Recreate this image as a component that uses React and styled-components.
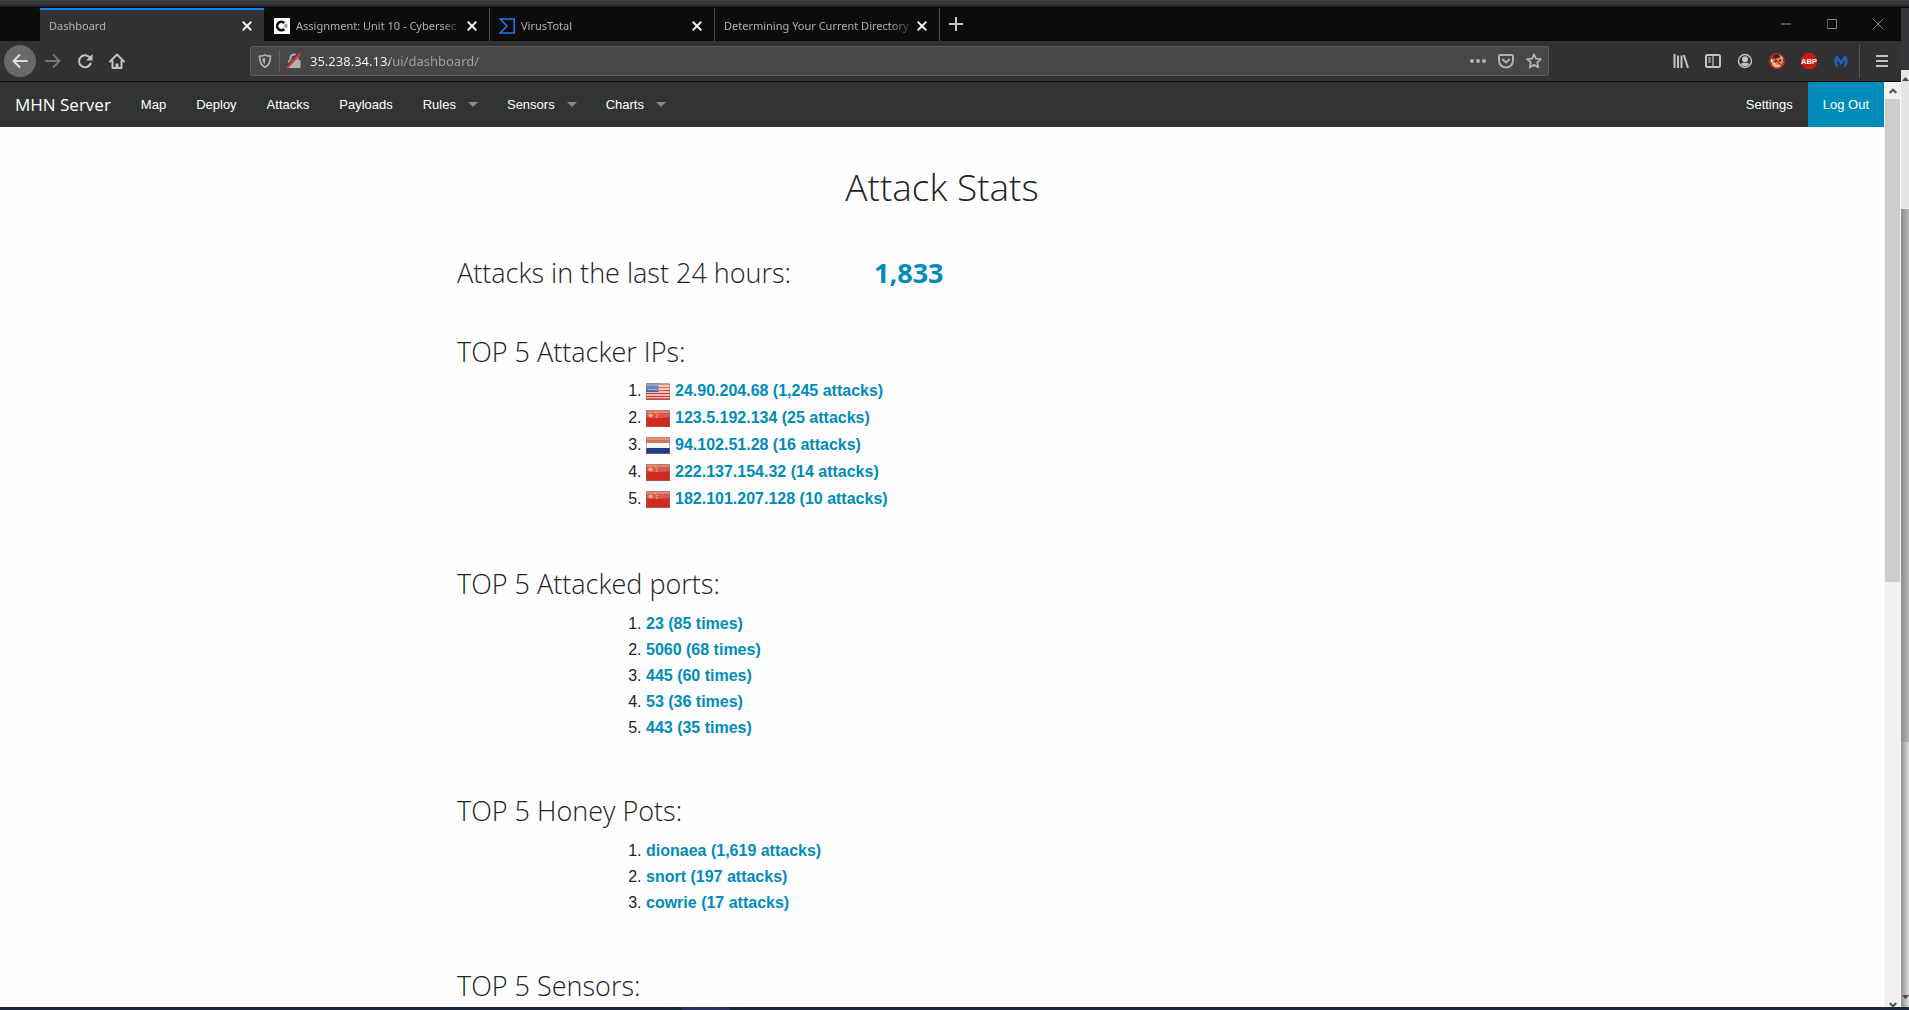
import React from 'react';
import styled, { createGlobalStyle, css } from 'styled-components';

const Global = createGlobalStyle`
  *, *::before, *::after { box-sizing: border-box; }
  html, body { margin: 0; height: 100%; background: #35363a; }
  #root { height: 100vh; }
  button, input { font: inherit; color: inherit; background: none; border: 0; padding: 0; margin: 0; }
  button { cursor: pointer; }
  a { text-decoration: none; }
`;

const ui = '"Noto Sans", "Open Sans", sans-serif';
const heading = '"Open Sans", "Noto Sans", sans-serif';
const copy = '"Liberation Sans", Arial, sans-serif';

/* ---------- desktop behind the browser ---------- */

const Desktop = styled.div`
  display: grid;
  grid-template-columns: minmax(0, 1fr) 8px;
  grid-template-rows: 8px minmax(0, 1fr) 3px;
  height: 100vh;
  overflow: hidden;
`;
const BackWindowTop = styled.div`
  grid-column: 1 / -1;
  background: linear-gradient(#3d3e42 1px, #35363a 1px 5px, #242528 5px 7px, #060607 7px);
`;
const BackWindowSide = styled.div`
  display: flex;
  flex-direction: column;
  background: linear-gradient(90deg, #8f8f8f, #dedede);
`;
const BackChrome = styled.div`
  height: 62px;
  background: #35363a;
`;
const BackTrack = styled.div`
  display: flex;
  justify-content: center;
  align-items: ${p => (p.$end ? 'flex-end' : 'flex-start')};
  padding: ${p => (p.$end ? '0 0 8px' : '7px 0 0')};
  background: ${p => (p.$end ? 'transparent' : '#e6e6e6')};
  ${p => (p.$end ? css`flex: 1;` : css`height: 139px;`)}
`;
const BackThumb = styled.div`
  height: 533px;
  background: linear-gradient(90deg, #8a8a8a, #b6b6b6);
`;
const Taskbar = styled.div`
  grid-column: 1 / -1;
  display: flex;
  justify-content: flex-start;
  padding-left: 682px;
  background: #18293b;
`;
const TaskItem = styled.div`
  width: 48px;
  background: #2b3060;
`;

/* ---------- browser window ---------- */

const Browser = styled.div`
  display: flex;
  flex-direction: column;
  min-width: 0;
  min-height: 0;
  background: #323234;
`;
const TabStrip = styled.div`
  display: flex;
  height: 33px;
  padding-left: 40px;
  background: #0c0c0d;
`;
const Tab = styled.div`
  display: flex;
  align-items: center;
  width: 225px;
  padding: 2px 10px 0 9px;
  border-right: 1px solid ${p => (p.$active ? '#0c0c0d' : '#4f4f51')};
  color: #b1b1b3;
  font: 11px/20px ${ui};
  ${p => p.$active && css`
    background: #323234;
    box-shadow: inset 0 2px #0a84ff;
  `}
`;
const TabLabel = styled.button`
  display: flex;
  flex: 1;
  align-items: center;
  gap: 6px;
  min-width: 0;
`;
const TabTitle = styled.span`
  flex: 1;
  overflow: hidden;
  text-align: left;
  white-space: nowrap;
  mask-image: linear-gradient(90deg, #000 calc(100% - 24px), transparent);
`;
const IconButton = styled.button`
  display: flex;
  align-items: center;
  justify-content: center;
  width: ${p => p.$w || 32}px;
  height: 32px;
  flex: none;
  color: ${p => p.$color || '#c3c3c4'};
`;
const BackButton = styled(IconButton)`
  margin-right: 1px;
  border-radius: 50%;
  background: #69696b;
`;
const CloseTab = styled.button`
  display: flex;
  align-items: center;
  justify-content: center;
  width: 14px;
  height: 20px;
  color: #f9f9fa;
`;
const WindowControls = styled.div`
  display: flex;
  margin-left: auto;
  color: #8c8c8d;
`;

const Toolbar = styled.div`
  display: flex;
  align-items: center;
  height: 41px;
  padding: 0 3px 0 4px;
  border-bottom: 1px solid #0c0c0d;
`;
const AddressBar = styled.form`
  display: flex;
  flex: 1;
  align-items: center;
  height: 30px;
  margin: 0 116px 0 117px;
  border: 1px solid #5c5c5e;
  border-radius: 2px;
  background: #474749;
  color: #b1b1b3;
`;
const AddressDivider = styled.span`
  width: 1px;
  height: 22px;
  background: #5f5f61;
`;
const AddressInput = styled.input`
  flex: 1;
  min-width: 0;
  height: 28px;
  margin-left: 2px;
  outline: none;
  color: transparent;
  font: 13px/28px ${ui};
  background: linear-gradient(90deg, #f9f9fa 80px, #a3a3a5 80px);
  background-clip: text;
  -webkit-background-clip: text;
`;
const ToolDivider = styled.span`
  width: 1px;
  height: 34px;
  margin: 0 6px 0 2px;
  background: #565658;
`;

/* ---------- page ---------- */

const Viewport = styled.div`
  display: flex;
  flex: 1;
  min-height: 0;
`;
const Page = styled.div`
  flex: 1;
  min-width: 0;
  overflow: hidden;
  background: #fefefe;
`;
const TopBar = styled.nav`
  display: flex;
  height: 45px;
  background: #323333;
  color: #ffffff;
  font: 13px/45px ${copy};
`;
const Brand = styled.a`
  padding: 0 15px;
  color: inherit;
  font: 17px/45px ${heading};
`;
const NavLink = styled.a`
  padding: 0 15px;
  color: inherit;
  background: ${p => (p.$primary ? '#008cba' : 'transparent')};
`;
const NavMenu = styled.button`
  display: flex;
  align-items: center;
  gap: 12px;
  padding: 0 14px 0 15px;
  &::after {
    content: '';
    border: 5px solid transparent;
    border-top-color: #8a8b89;
    border-bottom: 0;
  }
`;
const NavRight = styled.div`
  display: flex;
  margin-left: auto;
`;
const Content = styled.main`
  max-width: 1000px;
  margin: 0 auto;
  padding: 34px 15px 0;
  color: #222222;
  font: 16px/26px ${copy};
`;
const Title = styled.h2`
  margin: 0 0 41px;
  text-align: center;
  font: 300 37px/52px ${heading};
`;
const Summary = styled.section`
  display: grid;
  grid-template-columns: 43% 1fr;
  margin-bottom: 41px;
`;
const Heading = styled.h3`
  margin: 0;
  font: 300 27px/38px ${heading};
`;
const Total = styled(Heading)`
  color: #008cba;
  font-weight: 700;
`;
const Section = styled.section`
  margin-bottom: 51px;
`;
const Ranking = styled.ol`
  margin: ${p => (p.$flags ? '6px 0 53px 189px' : '8px 0 0 189px')};
  padding: 0;
  line-height: ${p => (p.$flags ? 27 : 26)}px;
`;
const RankLink = styled.a`
  color: #008cba;
  font-weight: 700;
`;
const FlagImage = styled.svg`
  width: 24px;
  height: 17px;
  margin-right: 5px;
  vertical-align: -4px;
`;

const ScrollBar = styled.div`
  display: flex;
  flex-direction: column;
  width: 17px;
  flex: none;
  border-right: 1px solid #f7f7f7;
  border-left: 1px solid #f7f7f7;
  background: #f0f0f0;
`;
const ScrollArrow = styled.button`
  display: flex;
  align-items: center;
  justify-content: center;
  height: 17px;
  color: #505050;
`;
const ScrollThumb = styled.div`
  height: 483px;
  background: #cdcdcd;
`;
const ScrollFill = styled.div`
  flex: 1;
`;
const BottomArrow = styled(ScrollArrow)`
  height: 8px;
  padding-top: 3px;
`;

/* ---------- icons ---------- */

const Icon = ({ size = 16, children, ...rest }) => (
  <svg width={size} height={size} viewBox="0 0 16 16" fill="none" stroke="currentColor" strokeWidth="2"
    strokeLinecap="round" strokeLinejoin="round" aria-hidden="true" {...rest}>{children}</svg>
);
const CloseIcon = () => <Icon size={12}><path d="M3 3l10 10M13 3L3 13" strokeWidth="2.4" /></Icon>;
const BackIcon = () => <Icon><path d="M15 8H1.5M7.5 2L1.5 8l6 6" /></Icon>;
const ForwardIcon = () => <Icon><path d="M1 8h13.500M8.500 2l6 6-6 6" /></Icon>;
const ReloadIcon = () => (
  <Icon>
    <path d="M13 4.800A6 6 0 1 0 13.600 10.500" />
    <path d="M15.500 1v6.500H9z" fill="currentColor" stroke="none" />
  </Icon>
);
const HomeIcon = () => (
  <Icon>
    <path d="M1 8.500L8 1.500l7 7M3.500 8v7h9V8" />
    <path d="M8 15v-4.500" strokeWidth="3" strokeLinecap="butt" />
  </Icon>
);
const ShieldIcon = () => (
  <Icon size={14}>
    <path d="M8 1.200c2 1 4 1.300 6.200 1.300C14.200 8.500 13 13 8 15 3 13 1.800 8.500 1.800 2.500 4 2.500 6 2.200 8 1.200z" />
    <path d="M8 4.500v7.300C6 10.500 5.200 8.500 5 5.200z" fill="currentColor" stroke="none" />
  </Icon>
);
const LockIcon = () => (
  <Icon>
    <path d="M4.500 8V5a3.500 3.500 0 0 1 7 0v3" />
    <rect x="2" y="7" width="12.500" height="8" rx="1" fill="currentColor" stroke="none" />
    <path d="M0 14L12.500 0" stroke="#474749" strokeWidth="2" />
    <path d="M1.500 14.500L14 1" stroke="#d7382e" />
  </Icon>
);
const DotsIcon = () => (
  <Icon fill="currentColor" stroke="none">
    <circle cx="2" cy="8" r="2" /><circle cx="8" cy="8" r="2" /><circle cx="14" cy="8" r="2" />
  </Icon>
);
const PocketIcon = () => (
  <Icon><path d="M2 2h12a1 1 0 0 1 1 1v4.500a7 7 0 0 1-14 0V3a1 1 0 0 1 1-1z" /><path d="M4.800 6.500L8 9.500l3.200-3" /></Icon>
);
const StarIcon = () => (
  <Icon><path d="M8 1.300l2 4.400 4.900.5-3.700 3.200 1.100 5L8 11.900l-4.300 2.500 1.100-5L1.100 6.200 6 5.700z" strokeWidth="1.800" /></Icon>
);
const LibraryIcon = () => (
  <Icon strokeLinecap="butt"><path d="M1.500 1v14M5 2.500V15M8.500 2.500V15M10.800 2L15 15" /></Icon>
);
const SidebarIcon = () => (
  <Icon><rect x="1" y="2" width="14" height="12" rx="1.500" /><path d="M8 2v12M3.500 5h2M3.500 7h2M3.500 9h2" strokeWidth="1.200" /></Icon>
);
const AccountIcon = () => (
  <Icon strokeWidth="1.400">
    <circle cx="8" cy="8" r="6.500" />
    <circle cx="8" cy="6.200" r="3" fill="currentColor" stroke="none" />
    <path d="M3.500 11c1.500-.8 2-1.300 4.500-1.300s3 .5 4.500 1.300A6 6 0 0 1 8 13.300 6 6 0 0 1 3.500 11z" fill="currentColor" stroke="none" />
  </Icon>
);
const FoxIcon = () => (
  <Icon strokeWidth="1.400">
    <circle cx="8" cy="8" r="7" fill="#33241f" stroke="none" />
    <path d="M2 5l3 1 4-1 4-2 1 4 1 4-3 4-5 1-4-3z" fill="#d08a55" stroke="none" />
    <path d="M3 10.500l3-1 2 3 3-2 2 1-3 3.500H6z" fill="#e8c08f" stroke="none" />
    <path d="M10 2l4 1 .5 4z" fill="#f5ece4" stroke="none" />
    <path d="M1.500 6l2 1v3l-2-1z" fill="#f5ece4" stroke="none" />
    <path d="M6 8.500h1M10.500 7.500h1" stroke="#241a17" />
    <circle cx="8" cy="8" r="7.200" stroke="#c9251c" />
    <path d="M3 3l10 10" stroke="#c9251c" />
  </Icon>
);
const AbpIcon = () => (
  <Icon>
    <path d="M4.700 0h6.600L16 4.700v6.600L11.300 16H4.700L0 11.300V4.700z" fill="#c91b12" stroke="none" />
    <text x="8" y="10.800" textAnchor="middle" fill="#fff" stroke="none" fontFamily="Liberation Sans, Arial, sans-serif" fontWeight="700" fontSize="7.500">ABP</text>
  </Icon>
);
const MalwareIcon = () => (
  <Icon>
    <path d="M4 2C.8 4.500.200 9 3 13.500l2.200.8C4 11.500 3.800 9.500 4.300 7.500L8 12l3.700-4.500c.5 2 .3 4-.9 6.800l2.200-.8c2.800-4.500 2.200-9-1-11.500L8 7.500z" fill="#2460b8" stroke="none" />
  </Icon>
);
const MenuIcon = () => <Icon><path d="M2 3h12M2 8h12M2 13h12" strokeLinecap="butt" /></Icon>;
const PlusIcon = () => <Icon><path d="M8 1v14M1 8h14" strokeLinecap="butt" /></Icon>;
const Chevron = ({ down }) => (
  <svg width="8" height="6" viewBox="0 0 8 6" fill="none" stroke="currentColor" strokeWidth="2" aria-hidden="true">
    <path d={down ? 'M.700 1L4 4.300 7.300 1' : 'M.700 5L4 1.700 7.300 5'} />
  </svg>
);
const Triangle = ({ down }) => (
  <svg width="7" height="4" viewBox="0 0 7 4" fill="#444" aria-hidden="true">
    <path d={down ? 'M0 0h7L3.500 4z' : 'M0 4h7L3.500 0z'} />
  </svg>
);
const CourseIcon = () => (
  <svg width="16" height="16" viewBox="0 0 16 16" fill="none" aria-hidden="true">
    <path d="M0 0h16v16H0z" fill="#fff" />
    <path d="M10.300 5A4.200 4.200 0 1 0 10.300 11" stroke="#111" strokeWidth="2.600" />
    <circle cx="11.800" cy="8" r="2" fill="#8ea3b0" />
  </svg>
);
const VirusTotalIcon = () => (
  <svg width="16" height="16" viewBox="0 0 16 16" fill="none" stroke="#2374e8" strokeWidth="1.600" aria-hidden="true">
    <path d="M1.200 1h14v14h-14L8 8z" />
  </svg>
);

const Flag = ({ country }) => (
  <FlagImage viewBox="0 0 24 17" role="img" aria-label={country}>
    {country === 'China' && (
      <>
        <path d="M0 0h24v17H0z" fill="#d02a20" />
        <path d="M4.500 2.500l.8 2 2.200.1-1.700 1.300.6 2.100-1.900-1.200L2.600 8l.6-2.100L1.500 4.600l2.200-.1zM9 2h1.200v1.200H9zM10.500 4h1.200v1.200h-1.200zM9.800 6.500H11v1.200H9.800z" fill="#f4b43a" />
      </>
    )}
    {country === 'United States' && (
      <>
        <path d="M0 0h24v17H0z" fill="#f6efec" />
        <path d="M0 1.500h24M0 4.500h24M0 7.500h24M0 10.500h24M0 13.500h24M0 16.200h24" stroke="#d5352c" strokeWidth="1.700" />
        <path d="M0 0h12.500v9H0z" fill="#3e64ad" />
        <path d="M2 6.500h9" stroke="#c5d3ea" strokeDasharray="1 1.200" />
      </>
    )}
    {country === 'Netherlands' && (
      <>
        <path d="M0 0h24v6H0z" fill="#cf4f2a" />
        <path d="M0 6h24v5H0z" fill="#f5f5f5" />
        <path d="M0 11h24v6H0z" fill="#233d86" />
      </>
    )}
    <path d="M0 0h24v7Q12 9 0 7z" fill="#fff" opacity="0.220" />
    <path d="M0 0h24v3H0z" fill="#e8c8a8" opacity="0.400" />
    <path d="M.500.500h23v16H.500z" fill="none" stroke="#8a7570" opacity="0.500" />
  </FlagImage>
);

/* ---------- data ---------- */

const tabs = [
  { title: 'Dashboard', active: true },
  { title: 'Assignment: Unit 10 - Cybersec', icon: <CourseIcon /> },
  { title: 'VirusTotal', icon: <VirusTotalIcon /> },
  { title: 'Determining Your Current Directory' },
];
const nav = ['Map', 'Deploy', 'Attacks', 'Payloads'];
const menus = ['Rules', 'Sensors', 'Charts'];
const sections = [
  {
    title: 'TOP 5 Attacker IPs:',
    rows: [
      { text: '24.90.204.68 (1,245 attacks)', country: 'United States' },
      { text: '123.5.192.134 (25 attacks)', country: 'China' },
      { text: '94.102.51.28 (16 attacks)', country: 'Netherlands' },
      { text: '222.137.154.32 (14 attacks)', country: 'China' },
      { text: '182.101.207.128 (10 attacks)', country: 'China' },
    ],
  },
  {
    title: 'TOP 5 Attacked ports:',
    rows: ['23 (85 times)', '5060 (68 times)', '445 (60 times)', '53 (36 times)', '443 (35 times)'].map(text => ({ text })),
  },
  {
    title: 'TOP 5 Honey Pots:',
    rows: ['dionaea (1,619 attacks)', 'snort (197 attacks)', 'cowrie (17 attacks)'].map(text => ({ text })),
  },
  { title: 'TOP 5 Sensors:', rows: [] },
];

export default function App() {
  return (
    <Desktop>
      <Global />
      <BackWindowTop />
      <Browser>
        <TabStrip>
          {tabs.map(t => (
            <Tab key={t.title} $active={t.active}>
              <TabLabel>{t.icon}<TabTitle>{t.title}</TabTitle></TabLabel>
              <CloseTab aria-label={`Close ${t.title}`}><CloseIcon /></CloseTab>
            </Tab>
          ))}
          <IconButton aria-label="New tab"><PlusIcon /></IconButton>
          <WindowControls>
            <IconButton $w={46} $color="#8c8c8d" aria-label="Minimize">
              <Icon size={10} strokeWidth="1.600"><path d="M0 8h16" /></Icon>
            </IconButton>
            <IconButton $w={46} $color="#8c8c8d" aria-label="Maximize">
              <Icon size={10} strokeWidth="1.600" strokeLinejoin="miter"><path d="M.800.800h14.400v14.400H.800z" /></Icon>
            </IconButton>
            <IconButton $w={46} $color="#8c8c8d" aria-label="Close window">
              <Icon size={10} strokeWidth="1.400"><path d="M.500.500l15 15M15.500.500l-15 15" /></Icon>
            </IconButton>
          </WindowControls>
        </TabStrip>
        <Toolbar>
          <BackButton $color="#dededf" aria-label="Back"><BackIcon /></BackButton>
          <IconButton $color="#78787a" aria-label="Forward"><ForwardIcon /></IconButton>
          <IconButton aria-label="Reload"><ReloadIcon /></IconButton>
          <IconButton aria-label="Home"><HomeIcon /></IconButton>
          <AddressBar onSubmit={e => e.preventDefault()}>
            <IconButton $w={28} $color="#b1b1b3" type="button" aria-label="Tracking protection"><ShieldIcon /></IconButton>
            <AddressDivider />
            <IconButton $w={28} $color="#b1b1b3" type="button" aria-label="Connection not secure"><LockIcon /></IconButton>
            <AddressInput aria-label="Address" defaultValue="35.238.34.13/ui/dashboard/" />
            <IconButton $w={28} $color="#b1b1b3" type="button" aria-label="Page actions"><DotsIcon /></IconButton>
            <IconButton $w={28} $color="#b1b1b3" type="button" aria-label="Save to Pocket"><PocketIcon /></IconButton>
            <IconButton $w={28} $color="#b1b1b3" type="button" aria-label="Bookmark"><StarIcon /></IconButton>
          </AddressBar>
          <IconButton aria-label="Library"><LibraryIcon /></IconButton>
          <IconButton aria-label="Sidebars"><SidebarIcon /></IconButton>
          <IconButton aria-label="Account"><AccountIcon /></IconButton>
          <IconButton aria-label="Fox blocker"><FoxIcon /></IconButton>
          <IconButton aria-label="Adblock Plus"><AbpIcon /></IconButton>
          <IconButton aria-label="Browser Guard"><MalwareIcon /></IconButton>
          <ToolDivider />
          <IconButton aria-label="Open menu"><MenuIcon /></IconButton>
        </Toolbar>
        <Viewport>
          <Page>
            <TopBar>
              <Brand href="#">MHN Server</Brand>
              {nav.map(n => <NavLink key={n} href="#">{n}</NavLink>)}
              {menus.map(n => <NavMenu key={n}>{n}</NavMenu>)}
              <NavRight>
                <NavLink href="#">Settings</NavLink>
                <NavLink href="#" $primary>Log Out</NavLink>
              </NavRight>
            </TopBar>
            <Content>
              <Title>Attack Stats</Title>
              <Summary>
                <Heading>Attacks in the last 24 hours:</Heading>
                <Total as="strong">1,833</Total>
              </Summary>
              {sections.map(s => (
                <Section key={s.title}>
                  <Heading>{s.title}</Heading>
                  <Ranking $flags={Boolean(s.rows[0]?.country)}>
                    {s.rows.map(r => (
                      <li key={r.text}>
                        {r.country && <Flag country={r.country} />}
                        <RankLink href="#">{r.text}</RankLink>
                      </li>
                    ))}
                  </Ranking>
                </Section>
              ))}
            </Content>
          </Page>
          <ScrollBar>
            <ScrollArrow aria-label="Scroll up"><Chevron /></ScrollArrow>
            <ScrollThumb />
            <ScrollFill />
            <BottomArrow aria-label="Scroll down"><Chevron down /></BottomArrow>
          </ScrollBar>
        </Viewport>
      </Browser>
      <BackWindowSide>
        <BackChrome />
        <BackTrack><Triangle /></BackTrack>
        <BackThumb />
        <BackTrack $end><Triangle down /></BackTrack>
      </BackWindowSide>
      <Taskbar><TaskItem /></Taskbar>
    </Desktop>
  );
}
